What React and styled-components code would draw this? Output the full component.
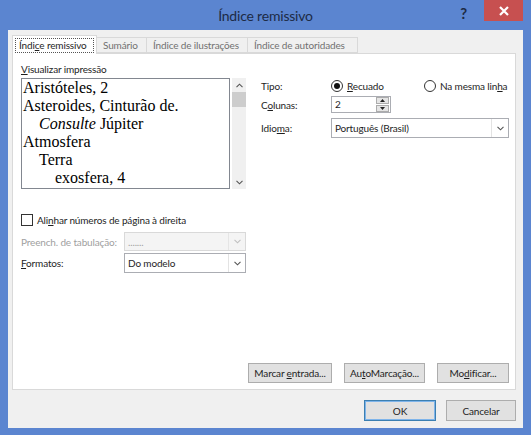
import React from "react";
import styled, { createGlobalStyle } from "styled-components";

const GlobalStyle = createGlobalStyle`
  html, body {
    margin: 0;
    padding: 0;
    background: #ffffff;
  }
  body {
    font-family: Lato, "Noto Sans", sans-serif;
    font-size: 10px;
    letter-spacing: -0.15px;
    color: #1e1e1e;
    white-space: nowrap;
  }
  u {
    text-underline-offset: 1px;
  }
`;

const Window = styled.div`
  width: 531px;
  height: 435px;
  box-sizing: border-box;
  background: #5b85d0;
  display: flex;
  flex-direction: column;
  padding: 0 8px 7px 8px;
`;

const TitleBar = styled.div`
  height: 30px;
  position: relative;
  display: flex;
  align-items: center;
  justify-content: center;
  margin: 0 -8px;

  .title {
    font-size: 14px;
    letter-spacing: -0.2px;
    color: #1d2b45;
  }
`;

const HelpButton = styled.div`
  position: absolute;
  right: 64px;
  top: 4px;
  font-size: 15px;
  font-weight: bold;
  color: #1d2b45;
`;

const CloseButton = styled.div`
  position: absolute;
  right: 8px;
  top: 0;
  width: 39px;
  height: 21px;
  background: #c75050;
  display: flex;
  align-items: center;
  justify-content: center;
`;

const Client = styled.div`
  flex: 1;
  background: #f0f0f0;
  display: flex;
  flex-direction: column;
  padding: 5px 7px 0 4px;
`;

const TabStrip = styled.div`
  display: flex;
  align-items: flex-end;
  height: 18px;
  position: relative;
  z-index: 1;
`;

const Tab = styled.div`
  box-sizing: border-box;
  height: ${(p) => (p.active ? "19px" : "16px")};
  width: ${(p) => p.w}px;
  margin-bottom: ${(p) => (p.active ? "-1px" : "0")};
  background: ${(p) => (p.active ? "#ffffff" : "#f0f0f0")};
  border: 1px solid #d9d9d9;
  border-bottom: ${(p) => (p.active ? "none" : "1px solid #d9d9d9")};
  border-left: ${(p) => (p.first ? "1px solid #d9d9d9" : "none")};
  color: ${(p) => (p.active ? "#1e1e1e" : "#707070")};
  display: flex;
  align-items: center;
  padding: ${(p) => (p.active ? "2px" : "0 0 0 6px")};

  .focus {
    border: 1px dotted #555;
    height: 13px;
    flex: 1;
    display: flex;
    align-items: center;
    padding-left: 3px;
  }
`;

const Panel = styled.div`
  height: 337px;
  box-sizing: border-box;
  background: #ffffff;
  border: 1px solid #d9d9d9;
  display: flex;
  flex-direction: column;
  padding: 9px 6px 6px 8px;
`;

const TopSection = styled.div`
  display: flex;
  gap: 15px;
`;

const PreviewColumn = styled.div`
  display: flex;
  flex-direction: column;
  width: 226px;
`;

const FieldLabel = styled.div`
  height: 13px;
  line-height: 13px;
  margin-bottom: 2px;
`;

const PreviewBox = styled.div`
  display: flex;
  height: 111px;
`;

const PreviewText = styled.div`
  width: 209px;
  box-sizing: border-box;
  border: 1px solid #828790;
  overflow: hidden;
  padding: 0 0 0 1px;
  font-family: "Liberation Serif", "Times New Roman", serif;
  font-size: 16px;
  line-height: 18px;
  letter-spacing: 0;
  color: #000;
`;

const PreviewLine = styled.div`
  padding-left: ${(p) => p.indent * 16}px;
`;

const ScrollBar = styled.div`
  width: 14px;
  margin-left: 2px;
  background: #f0f0f0;
  display: flex;
  flex-direction: column;
  align-items: center;
`;

const ScrollArrow = styled.div`
  height: 14px;
  width: 14px;
  display: flex;
  align-items: center;
  justify-content: center;
`;

const ScrollThumb = styled.div`
  width: 14px;
  height: 15px;
  background: #cdcdcd;
`;

const ScrollTrack = styled.div`
  flex: 1;
`;

const OptionsColumn = styled.div`
  flex: 1;
  display: flex;
  flex-direction: column;
  padding-top: 15px;
`;

const OptionRow = styled.div`
  display: flex;
  align-items: center;
  height: ${(p) => p.h || 18}px;
  margin-bottom: ${(p) => p.mb || 0}px;
`;

const OptionLabel = styled.div`
  width: 70px;
`;

const Radio = styled.div`
  display: flex;
  align-items: center;
  gap: 4px;
  width: ${(p) => p.w || "auto"};

  .circle {
    box-sizing: border-box;
    width: 12px;
    height: 12px;
    border-radius: 50%;
    border: 1px solid #333;
    background: #fff;
    display: flex;
    align-items: center;
    justify-content: center;
  }
  .dot {
    width: 6px;
    height: 6px;
    border-radius: 50%;
    background: #111;
  }
`;

const Spin = styled.div`
  display: flex;
  width: 60px;
  height: 17px;
  box-sizing: border-box;
  border: 1px solid #abadb3;

  .value {
    flex: 1;
    padding-left: 3px;
    line-height: 15px;
  }
  .buttons {
    width: 13px;
    display: flex;
    flex-direction: column;
    gap: 1px;
    padding: 0 1px 0 0;
  }
  .btn {
    flex: 1;
    background: #e5e5e5;
    border: 1px solid #acacac;
    display: flex;
    align-items: center;
    justify-content: center;
  }
`;

const Select = styled.div`
  width: ${(p) => p.w}px;
  height: ${(p) => p.h || 20}px;
  box-sizing: border-box;
  border: 1px solid ${(p) => (p.disabled ? "#d9d9d9" : "#abadb3")};
  background: ${(p) => (p.disabled ? "#f4f4f4" : "#ffffff")};
  color: ${(p) => (p.disabled ? "#a0a0a0" : "#1e1e1e")};
  display: flex;
  align-items: center;

  .value {
    flex: 1;
    padding-left: 3px;
  }
  .arrow {
    width: 16px;
    height: 100%;
    display: flex;
    align-items: center;
    justify-content: center;
    border-left: 1px solid ${(p) => (p.disabled ? "#e5e5e5" : "#e3e3e3")};
  }
`;

const CheckRow = styled.div`
  display: flex;
  align-items: center;
  gap: 4px;
  margin-top: 24px;
  height: 13px;

  .box {
    box-sizing: border-box;
    width: 12px;
    height: 12px;
    border: 1px solid #333;
    background: #fff;
  }
`;

const FormRow = styled.div`
  display: flex;
  align-items: center;
  margin-top: ${(p) => p.mt}px;
  color: ${(p) => (p.disabled ? "#a0a0a0" : "#1e1e1e")};

  .label {
    width: 103px;
  }
`;

const ActionRow = styled.div`
  margin-top: auto;
  display: flex;
  justify-content: flex-end;
  gap: 12px;
`;

const Button = styled.div`
  box-sizing: border-box;
  width: ${(p) => p.w}px;
  height: ${(p) => p.h || 20}px;
  background: #e1e1e1;
  border: 1px solid ${(p) => (p.primary ? "#3c7fb1" : "#adadad")};
  box-shadow: ${(p) => (p.primary ? "inset 0 0 0 1px #7eb4ea" : "none")};
  display: flex;
  align-items: center;
  justify-content: center;
  color: #1e1e1e;
  white-space: pre;
`;

const Footer = styled.div`
  display: flex;
  justify-content: flex-end;
  gap: 10px;
  padding: 10px 0 0 0;
`;

const Chevron = ({ up, color = "#555" }) => (
  <svg width="7" height="5" viewBox="0 0 7 5">
    <path
      d={up ? "M0.5 4.2 L3.5 1.2 L6.5 4.2" : "M0.5 0.8 L3.5 3.8 L6.5 0.8"}
      fill="none"
      stroke={color}
      strokeWidth="1.1"
    />
  </svg>
);

const Tri = ({ up }) => (
  <svg width="5" height="3" viewBox="0 0 5 3">
    <path d={up ? "M0 3 L2.5 0 L5 3 Z" : "M0 0 L2.5 3 L5 0 Z"} fill="#222" />
  </svg>
);

const previewLines = [
  { indent: 0, text: "Aristóteles, 2" },
  { indent: 0, text: "Asteroides, Cinturão de." },
  { indent: 1, text: <><i>Consulte</i> Júpiter</> },
  { indent: 0, text: "Atmosfera" },
  { indent: 1, text: "Terra" },
  { indent: 2, text: "exosfera, 4" },
  { indent: 2, text: "ionosfera, 3" },
];

const App = () => {
  return (
    <>
      <GlobalStyle />
      <Window>
        <TitleBar>
          <span className="title">Índice remissivo</span>
          <HelpButton>?</HelpButton>
          <CloseButton>
            <svg width="10" height="10" viewBox="0 0 10 10">
              <path d="M1 1 L9 9 M9 1 L1 9" stroke="#fff" strokeWidth="2.2" />
            </svg>
          </CloseButton>
        </TitleBar>
        <Client>
          <TabStrip>
            <Tab active first w={85}>
              <span className="focus">
                Índi<u>c</u>e remissivo
              </span>
            </Tab>
            <Tab w={50}>Sumário</Tab>
            <Tab w={101}>Índice de ilustrações</Tab>
            <Tab w={110}>Índice de autoridades</Tab>
          </TabStrip>
          <Panel>
            <TopSection>
              <PreviewColumn>
                <FieldLabel>
                  <u>V</u>isualizar impressão
                </FieldLabel>
                <PreviewBox>
                  <PreviewText>
                    {previewLines.map((l, i) => (
                      <PreviewLine key={i} indent={l.indent}>
                        {l.text}
                      </PreviewLine>
                    ))}
                  </PreviewText>
                  <ScrollBar>
                    <ScrollArrow>
                      <Chevron up />
                    </ScrollArrow>
                    <ScrollThumb />
                    <ScrollTrack />
                    <ScrollArrow>
                      <Chevron />
                    </ScrollArrow>
                  </ScrollBar>
                </PreviewBox>
              </PreviewColumn>
              <OptionsColumn>
                <OptionRow h={15} mb={3}>
                  <OptionLabel>Tipo:</OptionLabel>
                  <Radio w="93px">
                    <span className="circle">
                      <span className="dot" />
                    </span>
                    <span>
                      <u>R</u>ecuado
                    </span>
                  </Radio>
                  <Radio>
                    <span className="circle" />
                    <span>
                      Na mesma lin<u>h</u>a
                    </span>
                  </Radio>
                </OptionRow>
                <OptionRow h={17} mb={5}>
                  <OptionLabel>
                    C<u>o</u>lunas:
                  </OptionLabel>
                  <Spin>
                    <span className="value">2</span>
                    <span className="buttons">
                      <span className="btn">
                        <Tri up />
                      </span>
                      <span className="btn">
                        <Tri />
                      </span>
                    </span>
                  </Spin>
                </OptionRow>
                <OptionRow h={20}>
                  <OptionLabel>
                    Idio<u>m</u>a:
                  </OptionLabel>
                  <Select w={178}>
                    <span className="value">Português (Brasil)</span>
                    <span className="arrow">
                      <Chevron />
                    </span>
                  </Select>
                </OptionRow>
              </OptionsColumn>
            </TopSection>
            <CheckRow>
              <span className="box" />
              <span>
                Ali<u>n</u>har números de página à direita
              </span>
            </CheckRow>
            <FormRow mt={6} disabled>
              <span className="label">Preench. de tabulação:</span>
              <Select w={122} h={19} disabled>
                <span className="value">.......</span>
                <span className="arrow">
                  <Chevron color="#c0c0c0" />
                </span>
              </Select>
            </FormRow>
            <FormRow mt={2}>
              <span className="label">
                <u>F</u>ormatos:
              </span>
              <Select w={122} h={20}>
                <span className="value">Do modelo</span>
                <span className="arrow">
                  <Chevron />
                </span>
              </Select>
            </FormRow>
            <ActionRow>
              <Button w={84}>
                Marcar <u>e</u>ntrada...
              </Button>
              <Button w={81}>
                Au<u>t</u>oMarcação...
              </Button>
              <Button w={72}>
                Mo<u>d</u>ificar...
              </Button>
            </ActionRow>
          </Panel>
          <Footer>
            <Button primary w={72} h={21}>
              OK
            </Button>
            <Button w={70} h={21}>
              Cancelar
            </Button>
          </Footer>
        </Client>
      </Window>
    </>
  );
};

export default App;
